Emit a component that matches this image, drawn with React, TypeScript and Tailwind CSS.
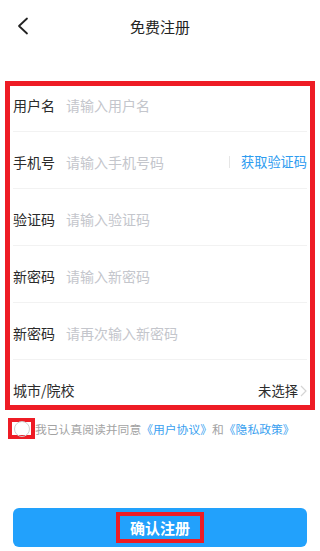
const font = { fontFamily: '"Noto Sans CJK SC", "Noto Sans", sans-serif' };

const rows = [
  { label: "用户名", placeholder: "请输入用户名" },
  { label: "手机号", placeholder: "请输入手机号码", code: true },
  { label: "验证码", placeholder: "请输入验证码" },
  { label: "新密码", placeholder: "请输入新密码" },
  { label: "新密码", placeholder: "请再次输入新密码" },
];

export default function App() {
  return (
    <div
      className="w-[320px] h-[551px] bg-white overflow-hidden text-[#333]"
      style={font}
    >
      {/* header */}
      <div className="relative flex h-[54px] items-center justify-center">
        <svg
          className="absolute left-[16px] top-[17px]"
          width="14"
          height="18"
          viewBox="0 0 14 18"
          fill="none"
          stroke="#222"
          strokeWidth="1.8"
          strokeLinecap="round"
          strokeLinejoin="round"
        >
          <polyline points="11,1.5 3,9 11,16.5" />
        </svg>
        <span className="text-[15px] text-[#222]">免费注册</span>
      </div>

      {/* form */}
      <div className="relative mt-[21px]">
        {rows.map((r, i) => (
          <div key={i} className="mx-[13px] flex h-[57px] items-center border-b border-[#f2f2f2] pt-1">
            <span className="w-[53px] text-[14px] text-[#2b2b2b]">{r.label}</span>
            <span className="flex-1 text-[14px] text-[#c4c6cc]">{r.placeholder}</span>
            {r.code && (
              <>
                <span className="h-[12px] w-px bg-[#e6e6e6]" />
                <span className="ml-[11px] text-[13.2px] text-[#2d9cf0]">获取验证码</span>
              </>
            )}
          </div>
        ))}
        <div className="mx-[13px] flex h-[57px] items-center pt-1">
          <span className="flex-1 text-[14px] text-[#2b2b2b]">城市/院校</span>
          <span className="text-[13.3px] text-[#2b2b2b]">未选择</span>
          <svg className="ml-[2px]" width="7" height="12" viewBox="0 0 7 12" fill="none" stroke="#d4d4d4" strokeWidth="1.2">
            <polyline points="1,1 6,6 1,11" />
          </svg>
        </div>

        {/* annotation box */}
        <div className="pointer-events-none absolute left-[5px] top-[6px] h-[329px] w-[310px] border-[5px] border-[#ee1c25]" />
      </div>

      {/* agreement */}
      <div className="mt-px flex items-center">
        <div className="ml-[8px] flex h-[21px] w-[27px] items-center justify-center border-4 border-[#ee1c25]">
          <div className="h-[16px] w-[16px] shrink-0 rounded-full border border-[#cfcfcf]" />
        </div>
        <span className="text-[11.8px] text-[#a3a3a3] leading-none">
          我已认真阅读并同意
          <span className="text-[#3a9ff0]">《用户协议》</span>
          和
          <span className="text-[#3a9ff0]">《隐私政策》</span>
        </span>
      </div>

      {/* submit */}
      <div className="mx-[13px] mt-[69px] flex h-[39px] items-center justify-center rounded-md bg-[#22a1fc]">
        <span className="border-4 border-[#ee1c25] px-[10px] py-[2px] text-[15px] font-bold text-white leading-[19px]">
          确认注册
        </span>
      </div>
    </div>
  );
}
